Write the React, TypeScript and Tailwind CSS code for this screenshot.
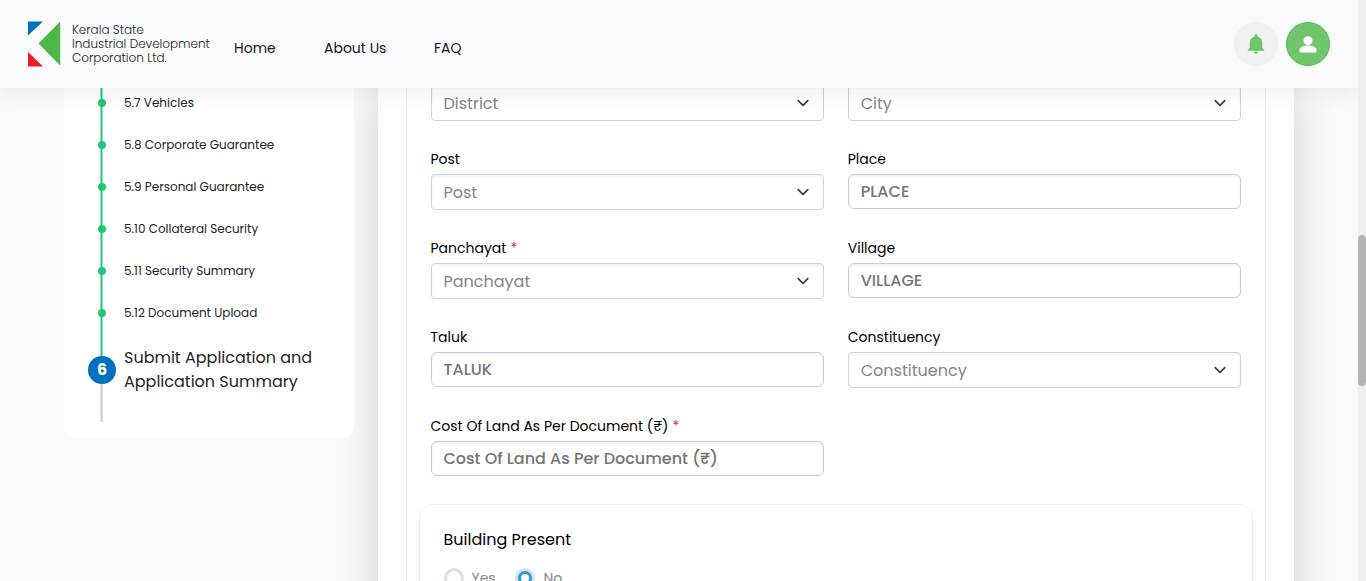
import React from "react";
import { IoMdNotifications } from "react-icons/io";

const steps = [
  "5.7 Vehicles",
  "5.8 Corporate Guarantee",
  "5.9 Personal Guarantee",
  "5.10 Collateral Security",
  "5.11 Security Summary",
  "5.12 Document Upload",
];

function Logo() {
  return (
    <svg width="33" height="46" viewBox="0 0 33 46" className="shrink-0">
      <path d="M0 0.5H15L0 14.5Z" fill="#0071bc" />
      <path d="M0 31L15 45.5H0Z" fill="#ed1c24" />
      <path d="M32.2 0.5V44.5L10.5 22.5Z" fill="#4db848" />
    </svg>
  );
}

function Header() {
  return (
    <header className="relative z-20 flex h-[88px] shrink-0 items-center bg-[#f9fafc] pr-7 pl-7 shadow-[0_8px_16px_rgba(0,0,0,0.05)]">
      <Logo />
      <div className="ml-[11px] w-[162px] text-[12px] leading-[14px] font-light whitespace-nowrap text-[#222]">
        <div>Kerala State</div>
        <div>Industrial Development</div>
        <div>Corporation Ltd.</div>
      </div>
      <nav className="flex pt-2 text-[14px] leading-5 text-[#16181b]">
        <a className="w-[90px]">Home</a>
        <a className="w-[110px]">About Us</a>
        <a>FAQ</a>
      </nav>
      <div className="ml-auto flex gap-2">
        <div className="flex size-11 items-center justify-center rounded-full bg-[#f1f1f1] text-[#6fc46b]">
          <IoMdNotifications size={24} />
        </div>
        <div className="flex size-11 items-center justify-center rounded-full border border-[#4db848] bg-[#71c56d]">
          <svg width="18" height="17" viewBox="0 0 18 17" fill="#fff">
            <ellipse cx="9" cy="4.6" rx="4.6" ry="4.3" />
            <path d="M9 9.4C4.2 9.4 0.4 11 0.4 14.3C0.4 15.7 1 16.4 2 16.4H16C17 16.4 17.6 15.7 17.6 14.3C17.6 11 13.8 9.4 9 9.4Z" />
          </svg>
        </div>
      </div>
    </header>
  );
}

function Sidebar() {
  return (
    <aside className="relative z-10 -mt-[6px] h-[356px] w-[290px] shrink-0 rounded-b-[12px] bg-white pl-6">
      {steps.map((s) => (
        <div key={s} className="flex h-[42px] items-center">
          <div className="grid h-full w-[27px] place-items-center">
            <span className="h-full w-[3px] border-x border-[#90e2bb] bg-[#21c677] [grid-area:1/1]" />
            <span className="size-2 rounded-full bg-[#21c677] [grid-area:1/1]" />
          </div>
          <span className="ml-[9px] text-[12px] whitespace-nowrap text-[#212529]">{s}</span>
        </div>
      ))}
      <div className="flex">
        <div className="flex w-7 flex-col">
          <span className="ml-3 h-[22px] w-[3px] border-x border-[#90e2bb] bg-[#21c677]" />
          <span className="flex size-7 items-center justify-center rounded-full bg-[#0071bc] text-[16px] font-bold text-white">6</span>
          <span className="ml-3 h-[38px] w-[3px] border-x border-[#e0e6eb] bg-[#c2cdd7]" />
        </div>
        <div className="ml-2 pt-3 text-[16px] leading-6 whitespace-nowrap text-[#212529]">
          <div>Submit Application and</div>
          <div>Application Summary</div>
        </div>
      </div>
    </aside>
  );
}

function Label({ children, required }: { children: React.ReactNode; required?: boolean }) {
  return (
    <div className="mb-[5px] h-5 text-[14px] leading-5 whitespace-nowrap text-black">
      {children}
      {required && <span className="ml-1 text-[#dc1e5a]">*</span>}
    </div>
  );
}

function Select({ children }: { children: React.ReactNode }) {
  return (
    <div className="flex h-9 items-center justify-between rounded-[4px] border border-[#ced0da] bg-white px-3 text-[16px] text-[#7f868d] shadow-[inset_0_2px_3px_rgba(0,0,0,0.05)]">
      <span className="pt-0.5">{children}</span>
      <svg width="16" height="16" viewBox="0 0 16 16" fill="none" stroke="#343a40" strokeWidth="1.6" strokeLinecap="round" strokeLinejoin="round">
        <path d="M3.2 5.6L8 10.4L12.8 5.6" />
      </svg>
    </div>
  );
}

function TextInput({ children }: { children: React.ReactNode }) {
  return (
    <div className="flex h-[35px] items-center rounded-[6px] border border-[#c1cdd7] bg-white px-3 text-[16px] font-medium text-[#757575] shadow-[inset_0_2px_3px_rgba(0,0,0,0.05)]">
      {children}
    </div>
  );
}

function FormPanel() {
  return (
    <main className="ml-6 h-[540px] w-[916px] shrink-0 bg-white px-7 shadow-[0_0_38px_rgba(0,0,0,0.175)]">
      <div className="h-full border-x border-[#efefef] px-3">
        <div className="-mt-[3px] grid grid-cols-2 gap-x-6 pr-3 pl-[11.5px] [grid-template-rows:64px_89px_89px_89px_92px]">
          <Select>District</Select>
          <Select>City</Select>
          <div>
            <Label>Post</Label>
            <Select>Post</Select>
          </div>
          <div>
            <Label>Place</Label>
            <TextInput>PLACE</TextInput>
          </div>
          <div>
            <Label required>Panchayat</Label>
            <Select>Panchayat</Select>
          </div>
          <div>
            <Label>Village</Label>
            <TextInput>VILLAGE</TextInput>
          </div>
          <div>
            <Label>Taluk</Label>
            <TextInput>TALUK</TextInput>
          </div>
          <div>
            <Label>Constituency</Label>
            <Select>Constituency</Select>
          </div>
          <div>
            <Label required>Cost Of Land As Per Document (₹)</Label>
            <TextInput>Cost Of Land As Per Document (₹)</TextInput>
          </div>
        </div>
        <section className="-mt-1 h-[120px] rounded-t-[14px] border border-[#efefef] pt-[23px] pr-6 pl-[23.5px]">
          <div className="text-[16px] leading-6 text-black">Building Present</div>
          <div className="mt-[16px] flex items-center text-[14px] leading-5 text-[#7f868d]">
            <span className="size-5 rounded-full border-[3px] border-[#dce2e4] bg-[#fdfdfd]" />
            <span className="ml-2 w-[43px]">Yes</span>
            <span className="flex size-5 items-center justify-center rounded-full border-[3px] border-[#dce2e4] bg-[#dce2e4]">
              <span className="size-[14px] shrink-0 rounded-full border-[3px] border-[#2f9bd6] bg-white" />
            </span>
            <span className="ml-[9px]">No</span>
          </div>
        </section>
      </div>
    </main>
  );
}

export default function App() {
  return (
    <div className="flex h-[581px] w-[1366px] overflow-hidden bg-[#f9fafc] font-[Poppins,Inter,sans-serif]">
      <div className="flex w-[1358px] flex-col overflow-hidden">
        <Header />
        <div className="flex items-start pl-16">
          <Sidebar />
          <FormPanel />
        </div>
      </div>
      <div className="w-2 bg-[#efefef] pt-[235px]">
        <div className="h-[151px] rounded-full bg-[#b4b4b4]" />
      </div>
    </div>
  );
}
